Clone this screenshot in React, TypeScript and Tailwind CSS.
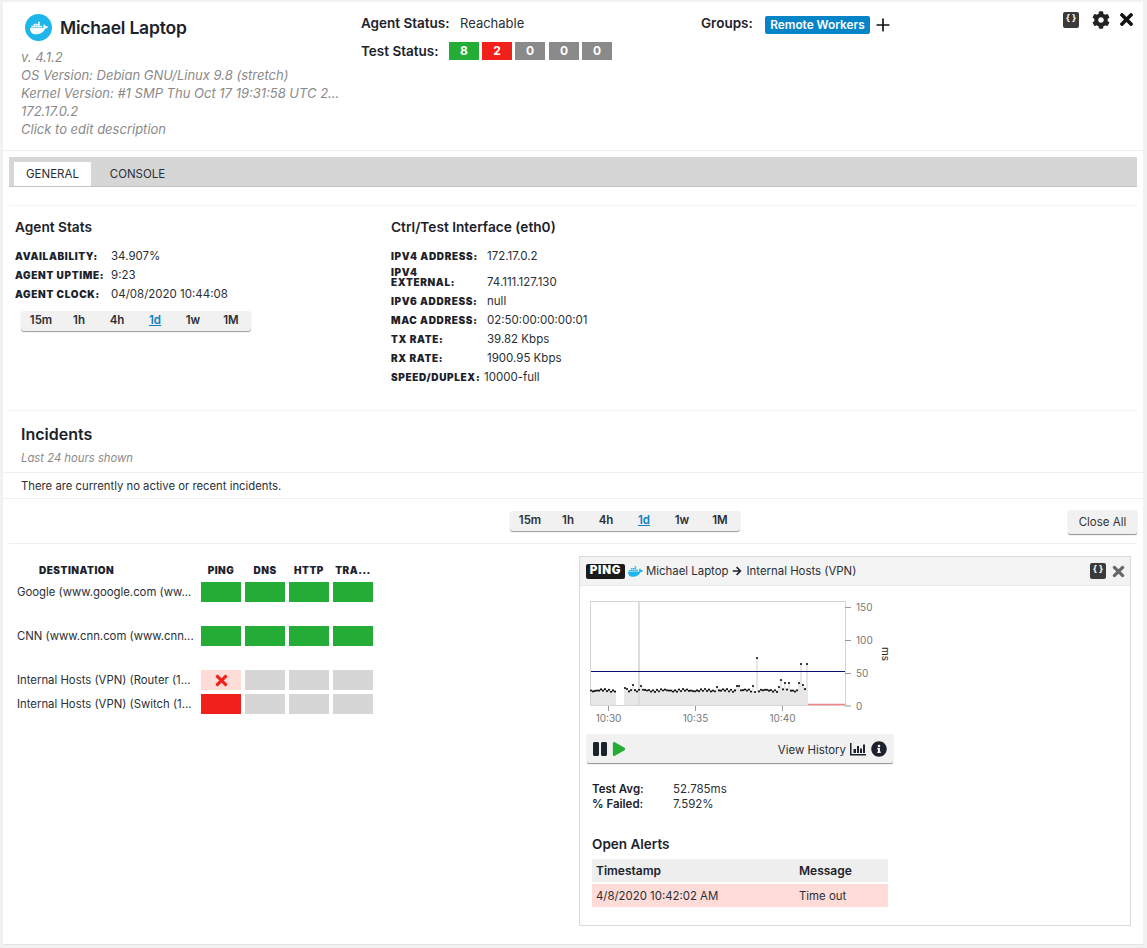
import { FaCog, FaDocker, FaTimes, FaPause, FaPlay, FaInfoCircle, FaArrowRight } from 'react-icons/fa';
import { Plus } from 'lucide-react';

const ranges = ['15m', '1h', '4h', '1d', '1w', '1M'];

const agentStats = [
  { label: 'AVAILABILITY:', value: '34.907%' },
  { label: 'AGENT UPTIME:', value: '9:23' },
  { label: 'AGENT CLOCK:', value: '04/08/2020 10:44:08' },
];

const destinations = [
  { name: 'Google (www.google.com (ww...', cells: ['ok', 'ok', 'ok', 'ok'], rowClass: 'h-[44px]' },
  { name: 'CNN (www.cnn.com (www.cnn...', cells: ['ok', 'ok', 'ok', 'ok'], rowClass: 'h-[44px]' },
  { name: 'Internal Hosts (VPN) (Router (1...', cells: ['x', 'na', 'na', 'na'], rowClass: 'h-[24px]' },
  { name: 'Internal Hosts (VPN) (Switch (1...', cells: ['fail', 'na', 'na', 'na'], rowClass: 'h-[24px]' },
];

function Label({ children, className = '' }: { children: React.ReactNode; className?: string }) {
  return <span className={`text-[10px] leading-[10px] font-black text-[#1c222b] ${className}`}>{children}</span>;
}

function RangeBar() {
  return (
    <div className="flex h-[20px] w-[230px] items-center rounded-[3px] bg-[#f1f1f1] pl-[1px] shadow-[0_1px_1px_rgba(0,0,0,0.4)]">
      {ranges.map((r) => (
        <span
          key={r}
          className={`w-[38px] text-center text-[11.5px] font-semibold ${r === '1d' ? 'text-[#0a7fc4] underline' : 'text-[#2a2f36]'}`}
        >
          {r}
        </span>
      ))}
    </div>
  );
}

function CodeIcon({ className = '' }: { className?: string }) {
  return (
    <span className={`flex h-[16px] w-[16px] items-start justify-center rounded-[2px] bg-[#3a3a3a] text-[9px] leading-[12px] font-bold text-white ${className}`}>
      {'{ }'}
    </span>
  );
}

function StatRow({ label, value, labelWidth }: { label: string; value: string; labelWidth: string }) {
  return (
    <div className="flex h-[19px] items-center">
      <Label className={`tracking-[0.65px] whitespace-nowrap ${labelWidth}`}>{label}</Label>
      <span className="pt-[2px] text-[11.5px] text-[#2a2f36]">{value}</span>
    </div>
  );
}

function StatusCell({ kind }: { kind: string }) {
  if (kind === 'ok') return <div className="h-[20px] w-[40px] bg-[#24ad36]" />;
  if (kind === 'fail') return <div className="h-[20px] w-[40px] bg-[#f2201a]" />;
  if (kind === 'x')
    return (
      <div className="flex h-[20px] w-[40px] items-center justify-center bg-[#ffdcd8] text-[17px] text-[#f2201a]">
        <FaTimes />
      </div>
    );
  return <div className="h-[20px] w-[40px] bg-[#d6d6d6]" />;
}

function PingChart() {
  const spikes: Record<number, number> = {
    625: 688, 627: 689, 633: 685, 641: 686, 717: 687, 737: 686, 739: 686, 753: 686, 757: 658,
    781: 680, 779: 687, 785: 683, 789: 683, 799: 683, 801: 664, 803: 685, 807: 664,
  };
  const points: { x: number; y: number }[] = [];
  for (let x = 591; x <= 808; x += 2) {
    if (x > 615 && x < 625) continue;
    const y = spikes[x] ?? 690.5 + Math.sin(x * 1.7) * 0.9 + Math.sin(x * 0.31) * 0.6;
    points.push({ x, y });
  }
  return (
    <svg viewBox="590 600 310 125" className="ml-[10px] block h-[125px] w-[310px]">
      <rect x="590.5" y="601.5" width="255" height="104" fill="#fff" stroke="#d4d4d4" />
      {points.map((p) => (
        <line key={p.x} x1={p.x} x2={p.x} y1={p.y} y2={705} stroke="#cfcfcf" strokeWidth="1" />
      ))}
      <line x1="639" x2="639" y1="602" y2="705" stroke="#dcdcdc" strokeWidth="2" />
      <line x1="591" x2="845" y1="671.5" y2="671.5" stroke="#0a1270" strokeWidth="1" />
      {points.map((p) => (
        <circle key={p.x} cx={p.x} cy={p.y} r="1.1" fill="#111" />
      ))}
      <line x1="808" x2="845" y1="704.5" y2="704.5" stroke="#f08a8a" strokeWidth="1.5" />
      <g stroke="#999" strokeWidth="1">
        <line x1="845" x2="851" y1="607.5" y2="607.5" />
        <line x1="845" x2="851" y1="640.5" y2="640.5" />
        <line x1="845" x2="851" y1="673.5" y2="673.5" />
        <line x1="845" x2="851" y1="706" y2="706" />
        <line x1="608.5" x2="608.5" y1="706" y2="711" />
        <line x1="695.5" x2="695.5" y1="706" y2="711" />
        <line x1="782.5" x2="782.5" y1="706" y2="711" />
      </g>
      <g fill="#777" fontSize="10" fontFamily="Inter, sans-serif">
        <text x="856" y="611">150</text>
        <text x="856" y="644">100</text>
        <text x="856" y="677">50</text>
        <text x="856" y="710">0</text>
        <text x="608.5" y="722" textAnchor="middle">10:30</text>
        <text x="695.5" y="722" textAnchor="middle">10:35</text>
        <text x="782.5" y="722" textAnchor="middle">10:40</text>
      </g>
      <text x="882" y="647" fill="#222" fontSize="10" fontFamily="Inter, sans-serif" transform="rotate(90 882 647)">ms</text>
    </svg>
  );
}

export default function App() {
  return (
    <div className="h-[948px] w-[1147px] overflow-hidden bg-[#f1f1f1] pt-[2px] pr-[4px] pl-[3px] font-['Inter',sans-serif] text-[#2a2f36]">
      <div className="h-[943px] border-b border-[#e4e4e4] bg-white">
        {/* Agent header */}
        <div className="flex h-[149px] border-b border-[#eeeeee]">
          <div className="w-[358px] pl-[18px]">
            <div className="mt-[12px] flex h-[27px] items-center gap-[8px] pl-[4px]">
              <span className="flex h-[27px] w-[27px] items-center justify-center rounded-full bg-[#1eb6ea] text-[18px] text-white">
                <FaDocker />
              </span>
              <span className="pt-[2px] text-[17.5px] font-semibold tracking-[-0.2px] text-[#1c222b]">Michael Laptop</span>
            </div>
            <div className="mt-[7px] text-[13px] leading-[18px] text-[#8a8a8a] italic">
              <div>v. 4.1.2</div>
              <div>OS Version: Debian GNU/Linux 9.8 (stretch)</div>
              <div className="whitespace-nowrap">Kernel Version: #1 SMP Thu Oct 17 19:31:58 UTC 2...</div>
              <div>172.17.0.2</div>
              <div>Click to edit description</div>
            </div>
          </div>
          <div className="w-[340px] text-[13.5px]">
            <div className="mt-[12px] flex h-[18px] items-center">
              <span className="w-[99px] font-semibold text-[#1c222b]">Agent Status:</span>
              <span className="pt-[1px] text-[13px]">Reachable</span>
            </div>
            <div className="mt-[9px] flex h-[20px] items-center">
              <span className="w-[88px] font-semibold text-[#1c222b]">Test Status:</span>
              <div className="flex gap-[3px]">
                <span className="flex h-[18px] w-[30px] items-center justify-center bg-[#24ad36] text-[12px] font-bold text-white">8</span>
                <span className="flex h-[18px] w-[30px] items-center justify-center bg-[#f2201a] text-[12px] font-bold text-white">2</span>
                <span className="flex h-[18px] w-[30px] items-center justify-center bg-[#8a8a8a] text-[12px] font-bold text-white">0</span>
                <span className="ml-[1px] flex h-[18px] w-[30px] items-center justify-center bg-[#8a8a8a] text-[12px] font-bold text-white">0</span>
                <span className="flex h-[18px] w-[30px] items-center justify-center bg-[#8a8a8a] text-[12px] font-bold text-white">0</span>
              </div>
            </div>
          </div>
          <div className="mt-[14px] flex h-[18px] w-[362px] items-center text-[13.5px]">
            <span className="-mt-[4px] w-[64px] font-semibold text-[#1c222b]">Groups:</span>
            <span className="flex h-[18px] w-[105px] items-center justify-center rounded-[2px] bg-[#0584c7] pt-[1px] text-[11.8px] font-semibold text-white">Remote Workers</span>
            <Plus size={20} className="ml-[3px] text-[#111]" />
          </div>
          <div className="mt-[9px] flex h-[18px] items-center">
            <CodeIcon />
            <FaCog className="ml-[13px] text-[18px] text-[#222]" />
            <FaTimes className="-mt-[2px] ml-[7px] text-[19px] text-[#111]" />
          </div>
        </div>

        {/* Tabs */}
        <div className="mx-[6px] mt-[6px] flex h-[30px] items-end border-b border-[#c4c4c4] bg-[#d6d6d6] pl-[5px] text-[11.5px]">
          <div className="flex h-[24px] w-[77px] items-center justify-center bg-white pt-[2px]">GENERAL</div>
          <div className="flex h-[24px] w-[93px] items-center justify-center pt-[2px]">CONSOLE</div>
        </div>

        <div className="mx-[6px] mt-[18px] border-t border-[#f4f4f4]" />

        {/* Stats */}
        <div className="mx-[6px] flex h-[205px] border-b border-[#f2f2f2] pt-[11px]">
          <div className="w-[382px] pl-[6px]">
            <h3 className="mb-[9px] h-[20px] text-[13.7px] leading-[20px] font-semibold text-[#1c222b]">Agent Stats</h3>
            {agentStats.map((s) => (
              <StatRow key={s.label} label={s.label} value={s.value} labelWidth="w-[96px]" />
            ))}
            <div className="mt-[8px] ml-[6px]">
              <RangeBar />
            </div>
          </div>
          <div>
            <h3 className="mb-[9px] h-[20px] text-[13.7px] leading-[20px] font-semibold text-[#1c222b]">Ctrl/Test Interface (eth0)</h3>
            <StatRow label="IPV4 ADDRESS:" value="172.17.0.2" labelWidth="w-[96px]" />
            <div className="flex h-[26px] items-end pb-[1px]">
              <Label className="mb-[3px] w-[96px] tracking-[0.65px]">
                IPV4
                <br />
                EXTERNAL:
              </Label>
              <span className="text-[11.5px] leading-[16px]">74.111.127.130</span>
            </div>
            <StatRow label="IPV6 ADDRESS:" value="null" labelWidth="w-[96px]" />
            <StatRow label="MAC ADDRESS:" value="02:50:00:00:00:01" labelWidth="w-[96px]" />
            <StatRow label="TX RATE:" value="39.82 Kbps" labelWidth="w-[96px]" />
            <StatRow label="RX RATE:" value="1900.95 Kbps" labelWidth="w-[96px]" />
            <StatRow label="SPEED/DUPLEX:" value="10000-full" labelWidth="w-[93px]" />
          </div>
        </div>

        {/* Incidents */}
        <div className="pl-[18px]">
          <h2 className="mt-[12px] h-[22px] text-[16px] leading-[22px] font-semibold text-[#1c222b]">Incidents</h2>
          <p className="mt-[4px] h-[18px] text-[11.3px] leading-[18px] text-[#8a8a8a] italic">Last 24 hours shown</p>
        </div>
        <div className="mt-[5px] flex h-[27px] items-center border-y border-[#f0f0f0] pt-[2px] pl-[18px] text-[11.3px]">
          There are currently no active or recent incidents.
        </div>

        {/* Test grid controls */}
        <div className="mx-[6px] flex h-[45px] items-start border-b border-[#f0f0f0] pt-[12px] pl-[501px]">
          <RangeBar />
          <button className="-mt-[1px] ml-auto h-[24px] w-[69px] rounded-[2px] bg-[#f1f1f1] pt-[1px] text-[11.5px] text-[#333] shadow-[0_1px_1px_rgba(0,0,0,0.45)]">
            Close All
          </button>
        </div>

        <div className="flex pl-[6px]">
          {/* Destination grid */}
          <div className="w-[570px] pt-[20px]">
            <div className="flex h-[12px] items-center">
              <span className="flex w-[192px] pl-[30px]"><Label className="tracking-[0.5px]">DESTINATION</Label></span>
              <div className="flex gap-[4px]">
                {['PING', 'DNS', 'HTTP', 'TRA...'].map((h) => (
                  <span key={h} className="flex w-[40px] justify-center"><Label className="tracking-[0.5px]">{h}</Label></span>
                ))}
              </div>
            </div>
            <div className="mt-[6px]">
              {destinations.map((d) => (
                <div key={d.name} className={`flex items-start ${d.rowClass}`}>
                  <span className="h-[20px] w-[192px] pl-[8px] text-[11.35px] leading-[20px] whitespace-nowrap">{d.name}</span>
                  <div className="flex gap-[4px]">
                    {d.cells.map((c, i) => (
                      <StatusCell key={i} kind={c} />
                    ))}
                  </div>
                </div>
              ))}
            </div>
          </div>

          {/* Test detail pane */}
          <div className="mt-[12px] h-[370px] w-[552px] border border-[#d9d9d9]">
            <div className="flex h-[29px] items-center border-b border-[#e8e8e8] bg-[#f3f3f3] pl-[6px] text-[11.4px]">
              <span className="flex h-[15px] w-[39px] items-center justify-center rounded-[2px] bg-[#1a1a1a] text-[11.5px] font-black tracking-[0.8px] text-white">PING</span>
              <FaDocker className="ml-[3px] text-[15px] text-[#1eb6ea]" />
              <span className="ml-[3px] pt-[2px]">Michael Laptop</span>
              <FaArrowRight className="mr-[5px] ml-[3px] text-[10px] text-[#1c222b]" />
              <span className="pt-[2px]">Internal Hosts (VPN)</span>
              <CodeIcon className="mr-[4px] ml-auto" />
              <FaTimes className="mr-[3px] text-[17px] text-[#666]" />
            </div>
            <div className="mt-[14px]">
              <PingChart />
            </div>
            <div className="mt-[9px] ml-[7px] flex h-[29px] w-[306px] items-center rounded-[2px] bg-[#f1f1f1] pr-[6px] pl-[5px] shadow-[0_1px_1px_rgba(0,0,0,0.45)]">
              <FaPause className="text-[16px] text-[#1c222b]" />
              <FaPlay className="ml-[4px] text-[14px] text-[#24ad36]" />
              <span className="ml-auto pt-[5px] text-[11.4px]">View History</span>
              <svg viewBox="0 0 16 16" className="ml-[4px] h-[16px] w-[16px] text-[#1c222b]" fill="currentColor">
                <path d="M0 2h1.5v11H16v1.5H0z" />
                <path d="M3.5 8H6v4H3.5zM7 5h2v7H7zM10 7.5h2V12h-2zM13 3.5h2V12h-2z" />
              </svg>
              <FaInfoCircle className="ml-[5px] text-[16px] text-[#1c222b]" />
            </div>
            <div className="mt-[19px] pl-[12px] text-[11.5px]">
              <div className="flex h-[15px] items-center">
                <span className="w-[81px] font-semibold text-[#1c222b]">Test Avg:</span>
                <span>52.785ms</span>
              </div>
              <div className="flex h-[15px] items-center">
                <span className="w-[81px] font-semibold text-[#1c222b]">% Failed:</span>
                <span>7.592%</span>
              </div>
            </div>
            <h3 className="mt-[22px] ml-[12px] h-[20px] text-[13.5px] leading-[20px] font-semibold text-[#1c222b]">Open Alerts</h3>
            <div className="mt-[5px] ml-[12px] w-[296px]">
              <div className="flex h-[23px] items-center bg-[#eeeeee] pl-[4px] text-[12px] font-semibold text-[#1c222b]">
                <span className="w-[203px]">Timestamp</span>
                <span>Message</span>
              </div>
              <div className="mt-[2px] flex h-[23px] items-center bg-[#ffdcd8] pt-[2px] pl-[4px] text-[11.4px]">
                <span className="w-[203px]">4/8/2020 10:42:02 AM</span>
                <span>Time out</span>
              </div>
            </div>
          </div>
        </div>
      </div>
    </div>
  );
}
